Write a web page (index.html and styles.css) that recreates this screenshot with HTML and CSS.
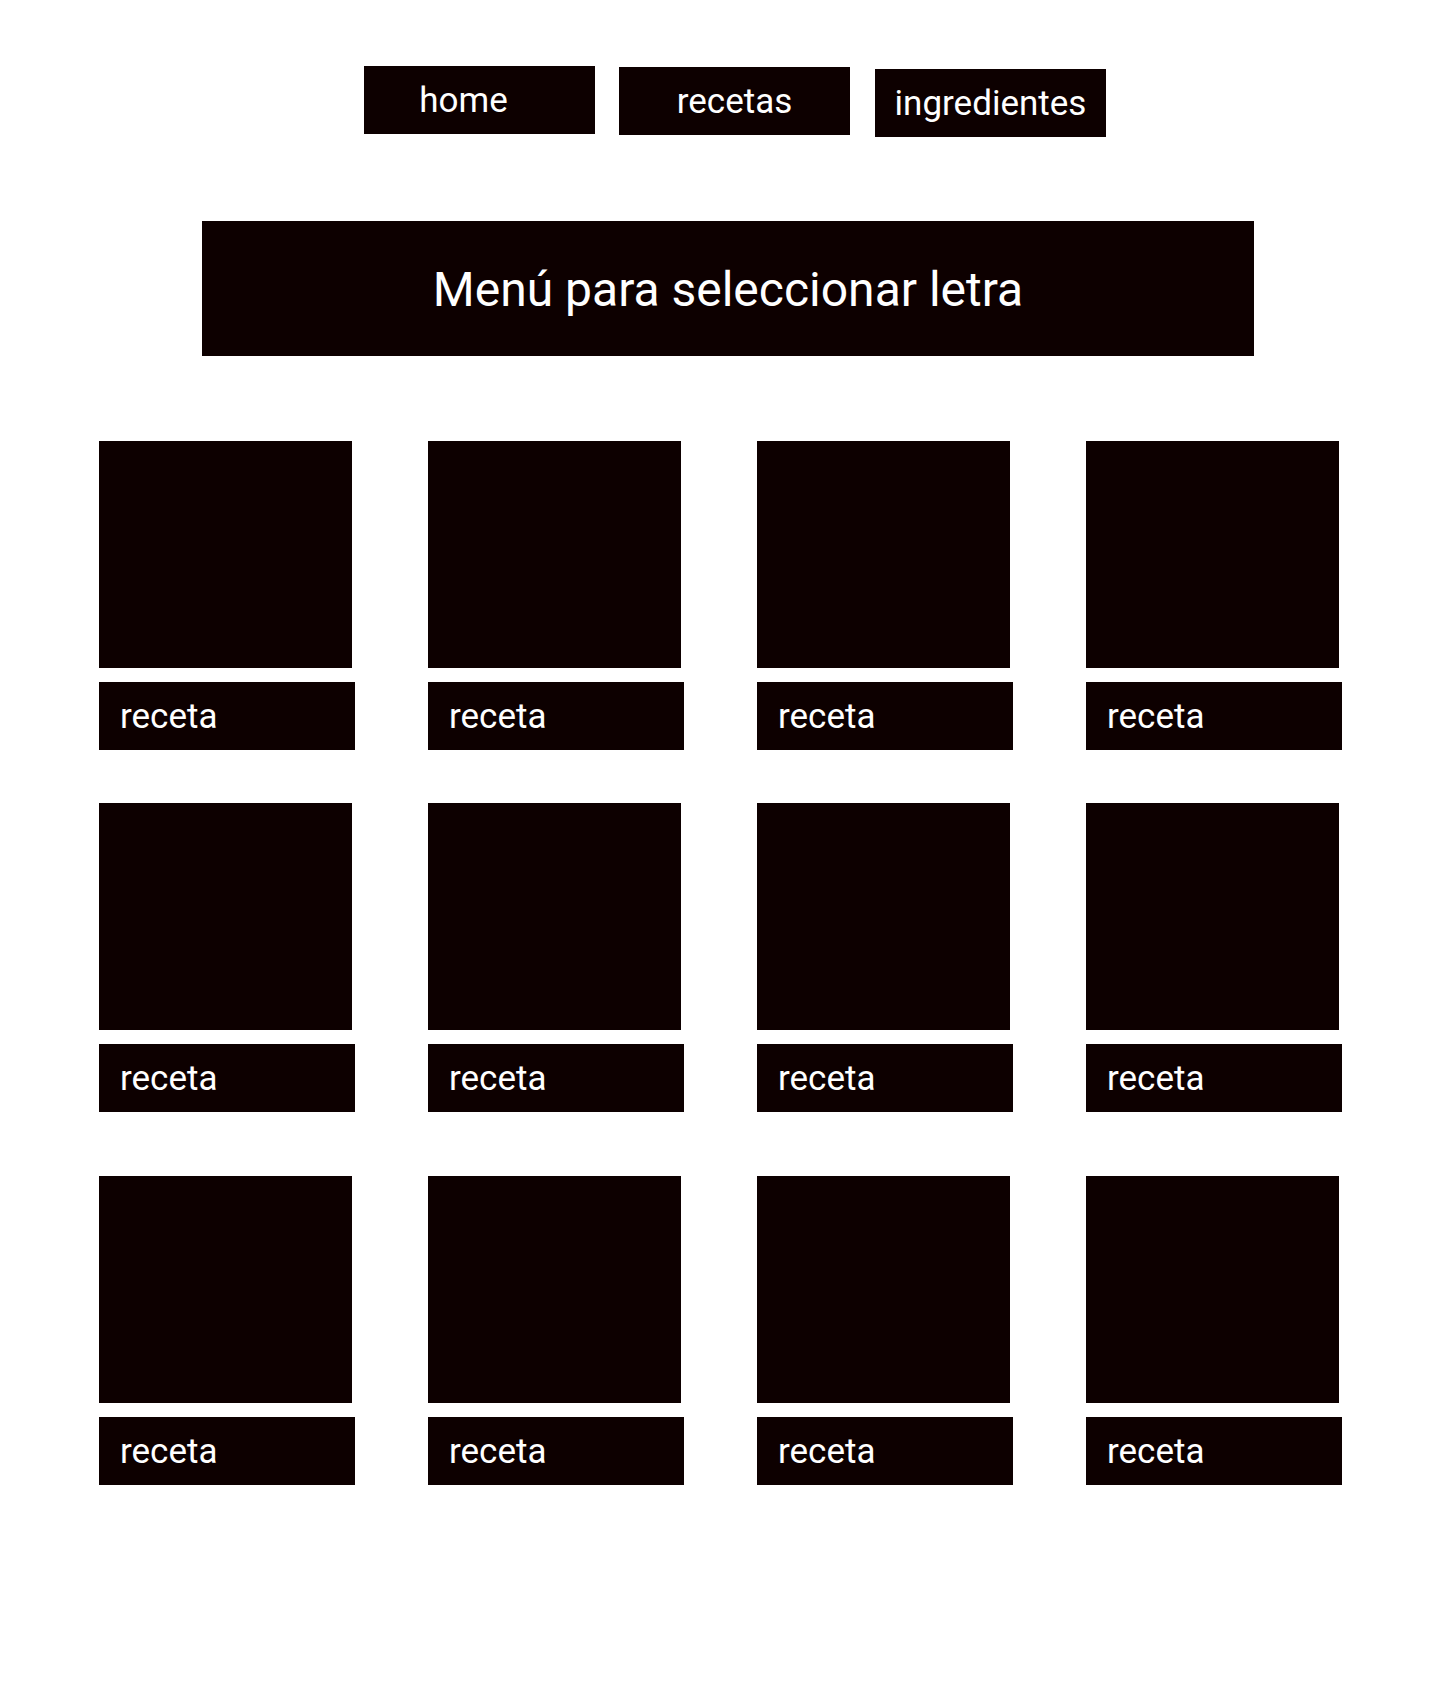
FILE: index.html
```html
<!DOCTYPE html>
<html lang="es">
<head>
    <meta charset="UTF-8">
    <meta name="viewport" content="width=device-width, initial-scale=1.0">
    <title>Recetas</title>
    <link rel="stylesheet" href="styles.css">
</head>
<body>
    <nav class="nav">
        <a class="nav-btn nav-home" href="#">home</a>
        <a class="nav-btn nav-recetas" href="#">recetas</a>
        <a class="nav-btn nav-ingredientes" href="#">ingredientes</a>
    </nav>

    <div class="letter-menu">Menú para seleccionar letra</div>

    <div class="recipes">
        <div class="row">
            <div class="card"><div class="card-img"></div><div class="card-label">receta</div></div>
            <div class="card"><div class="card-img"></div><div class="card-label">receta</div></div>
            <div class="card"><div class="card-img"></div><div class="card-label">receta</div></div>
            <div class="card"><div class="card-img"></div><div class="card-label">receta</div></div>
        </div>
        <div class="row row-2">
            <div class="card"><div class="card-img"></div><div class="card-label">receta</div></div>
            <div class="card"><div class="card-img"></div><div class="card-label">receta</div></div>
            <div class="card"><div class="card-img"></div><div class="card-label">receta</div></div>
            <div class="card"><div class="card-img"></div><div class="card-label">receta</div></div>
        </div>
        <div class="row row-3">
            <div class="card"><div class="card-img"></div><div class="card-label">receta</div></div>
            <div class="card"><div class="card-img"></div><div class="card-label">receta</div></div>
            <div class="card"><div class="card-img"></div><div class="card-label">receta</div></div>
            <div class="card"><div class="card-img"></div><div class="card-label">receta</div></div>
        </div>
    </div>
</body>
</html>
```

FILE: styles.css
```css
body {
    margin: 0;
    font-family: Roboto, 'Noto Sans', sans-serif;
    color: #fff;
    background: #fff;
}
.nav {
    display: flex;
    align-items: flex-start;
    padding: 66px 0 0 364px;
}
.nav-btn {
    display: block;
    width: 231px;
    height: 68px;
    line-height: 69px;
    background-color: #0d0000;
    color: #fff;
    font-size: 35px;
    text-align: center;
    text-decoration: none;
    box-sizing: border-box;
}
.nav-home {
    padding-right: 32px;
}
.nav-recetas {
    margin: 1px 0 0 24px;
}
.nav-ingredientes {
    margin: 3px 0 0 25px;
}
.letter-menu {
    width: 1052px;
    height: 135px;
    margin: 84px 0 0 202px;
    background-color: #0d0000;
    font-size: 48px;
    line-height: 137px;
    text-align: center;
}
.recipes {
    padding: 85px 0 100px 99px;
}
.row {
    display: grid;
    grid-template-columns: repeat(4, 256px);
    column-gap: 73px;
}
.row-2 {
    margin-top: 53px;
}
.row-3 {
    margin-top: 64px;
}
.card-img {
    width: 253px;
    height: 227px;
    background-color: #0d0000;
}
.card-label {
    height: 68px;
    margin-top: 14px;
    padding-left: 21px;
    background-color: #0d0000;
    font-size: 35px;
    line-height: 70px;
}
```
